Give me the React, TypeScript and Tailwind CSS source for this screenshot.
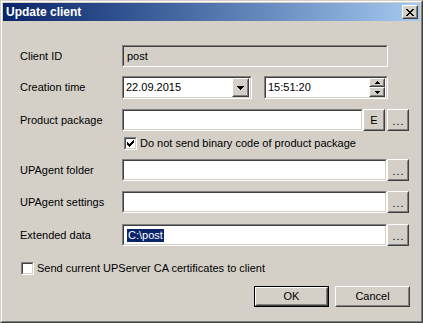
import React from "react";

const sunkenOuter =
  "border border-t-[#808080] border-l-[#808080] border-r-white border-b-white";
const sunkenInner =
  "border border-t-[#404040] border-l-[#404040] border-r-[#d4d0c8] border-b-[#d4d0c8]";
const raisedOuter =
  "border border-t-white border-l-white border-r-[#404040] border-b-[#404040]";
const raisedInner =
  "border border-t-[#d4d0c8] border-l-[#d4d0c8] border-r-[#808080] border-b-[#808080]";

// classic 7x7 check glyph
const CHECK = [
  "......#",
  ".....##",
  "#...###",
  "##.###.",
  "#####..",
  ".###...",
  "..#....",
];

function Field({
  className = "",
  gray = false,
  children,
}: {
  className?: string;
  gray?: boolean;
  children?: React.ReactNode;
}) {
  return (
    <div className={`${sunkenOuter} ${className}`}>
      <div
        className={`${sunkenInner} h-full flex items-center pl-[3px] ${
          gray ? "bg-[#d4d0c8]" : "bg-white"
        }`}
      >
        {children}
      </div>
    </div>
  );
}

function Btn({
  className = "",
  children,
}: {
  className?: string;
  children?: React.ReactNode;
}) {
  return (
    <div className={`${raisedOuter} bg-[#d4d0c8] ${className}`}>
      <div className={`${raisedInner} h-full flex items-center justify-center`}>
        {children}
      </div>
    </div>
  );
}

function Dots() {
  return <span className="tracking-[1px] pl-px leading-[13px] pt-[2px]">...</span>;
}

function Arrow({ up = false, w = 5 }: { up?: boolean; w?: number }) {
  const h = Math.ceil(w / 2);
  const pts = up ? `0,${h} ${w},${h} ${w / 2},0` : `0,0 ${w},0 ${w / 2},${h}`;
  return (
    <svg width={w} height={h} viewBox={`0 0 ${w} ${h}`} shapeRendering="crispEdges">
      <polygon points={pts} fill="#000" />
    </svg>
  );
}

function CheckBox({ checked = false }: { checked?: boolean }) {
  return (
    <div className={`${sunkenOuter} w-[13px] h-[13px] shrink-0`}>
      <div className={`${sunkenInner} w-full h-full bg-white`}>
        {checked && (
          <svg width="9" height="9" viewBox="0 0 9 9" shapeRendering="crispEdges">
            {CHECK.flatMap((row, y) =>
              row.split("").map((c, x) =>
                c === "#" ? (
                  <rect key={`${x}-${y}`} x={x + 1} y={y + 1} width="1" height="1" fill="#000" />
                ) : null
              )
            )}
          </svg>
        )}
      </div>
    </div>
  );
}

function Row({ label, children, className = "" }: { label: string; children: React.ReactNode; className?: string }) {
  return (
    <div className={`flex items-center ${className}`}>
      <span className="w-[102px] leading-[13px]">{label}</span>
      {children}
    </div>
  );
}

export default function App() {
  return (
    <div className="w-[423px] h-[323px] font-['Liberation_Sans',Arial,sans-serif] text-[11px] text-black">
      <div className="w-full h-full border border-t-[#d4d0c8] border-l-[#d4d0c8] border-r-[#404040] border-b-[#404040]">
        <div className="w-full h-full border border-t-white border-l-white border-r-[#808080] border-b-[#808080] bg-[#d4d0c8] p-px flex flex-col">
          {/* Title bar */}
          <div className="h-[18px] bg-linear-to-r from-[#0a246a] to-[#a6caf0] flex items-center pl-[3px] pr-[2px]">
            <span className="text-white font-bold text-[12px] leading-[14px] flex-1">Update client</span>
            <Btn className="w-[16px] h-[14px]">
              <svg width="8" height="7" viewBox="0 0 8 7" shapeRendering="crispEdges">
                {[0, 1, 2, 3, 4, 5, 6].map((i) => (
                  <g key={i}>
                    <rect x={i} y={i} width="2" height="1" fill="#000" />
                    <rect x={6 - i} y={i} width="2" height="1" fill="#000" />
                  </g>
                ))}
              </svg>
            </Btn>
          </div>

          {/* Body */}
          <div className="flex flex-col pl-[17px]">
            <Row label="Client ID" className="mt-[24px]">
              <Field gray className="w-[266px] h-[22px]">
                <span>post</span>
              </Field>
            </Row>

            <Row label="Creation time" className="mt-[9px]">
              <div className={`${sunkenOuter} w-[130px] h-[23px]`}>
                <div className={`${sunkenInner} h-full flex items-center bg-white pl-[2px] pr-px`}>
                  <span className="flex-1">22.09.2015</span>
                  <Btn className="w-[17px] h-[19px]">
                    <Arrow w={7} />
                  </Btn>
                </div>
              </div>
              <div className={`${sunkenOuter} w-[124px] h-[23px] ml-[12px]`}>
                <div className={`${sunkenInner} h-full flex items-center bg-white pl-[2px] pr-px`}>
                  <span className="flex-1">15:51:20</span>
                  <div className="flex flex-col">
                    <Btn className="w-[16px] h-[9px]">
                      <Arrow up w={5} />
                    </Btn>
                    <Btn className="w-[16px] h-[10px]">
                      <Arrow w={5} />
                    </Btn>
                  </div>
                </div>
              </div>
            </Row>

            <Row label="Product package" className="mt-[10px]">
              <Field className="w-[241px] h-[22px]" />
              <Btn className="w-[22px] h-[22px]">
                <span>E</span>
              </Btn>
              <Btn className="w-[22px] h-[22px] ml-[2px]">
                <Dots />
              </Btn>
            </Row>

            <div className="flex items-center mt-[6px] ml-[104px]">
              <CheckBox checked />
              <span className="ml-[3px] leading-[13px]">Do not send binary code of product package</span>
            </div>

            <Row label="UPAgent folder" className="mt-[9px]">
              <Field className="w-[265px] h-[22px]" />
              <Btn className="w-[22px] h-[22px]">
                <Dots />
              </Btn>
            </Row>

            <Row label="UPAgent settings" className="mt-[10px]">
              <Field className="w-[265px] h-[22px]" />
              <Btn className="w-[22px] h-[22px]">
                <Dots />
              </Btn>
            </Row>

            <Row label="Extended data" className="mt-[11px]">
              <Field className="w-[265px] h-[22px]">
                <span className="bg-[#0a246a] text-white leading-[13px] px-px">{"C:\\post"}</span>
              </Field>
              <Btn className="w-[22px] h-[22px]">
                <Dots />
              </Btn>
            </Row>

            <div className="flex items-center mt-[16px] ml-px">
              <CheckBox />
              <span className="ml-[3px] leading-[13px]">Send current UPServer CA certificates to client</span>
            </div>

            <div className="flex mt-[11px] ml-[234px] gap-[6px]">
              <div className="w-[75px] h-[21px] border border-black">
                <Btn className="w-full h-full">
                  <span>OK</span>
                </Btn>
              </div>
              <Btn className="w-[75px] h-[21px]">
                <span>Cancel</span>
              </Btn>
            </div>
          </div>
        </div>
      </div>
    </div>
  );
}
